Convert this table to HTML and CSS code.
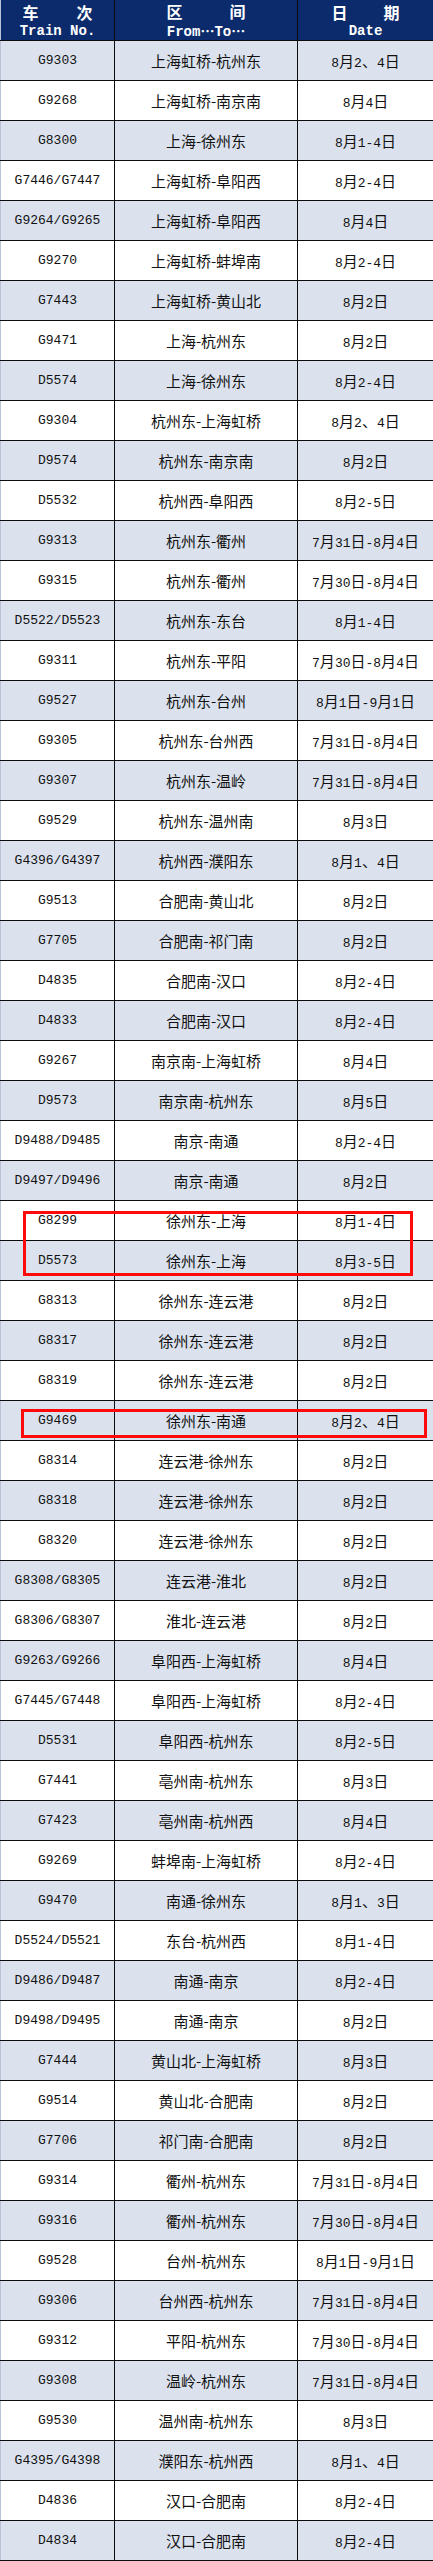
FILE: index.html
```html
<!DOCTYPE html>
<html lang="zh-CN">
<head>
<meta charset="utf-8">
<title>列车停运表</title>
<link rel="stylesheet" href="styles.css">
</head>
<body>
<div class="sheet">
<table class="grid">
<colgroup><col class="c1"><col class="c2"><col class="c3"></colgroup>
<thead>
<tr>
<th><div class="pair w1"><span>车</span><span>次</span></div><div class="en">Train No.</div></th>
<th><div class="pair w2"><span>区</span><span>间</span></div><div class="en">From<span class="k">…</span>To<span class="k">…</span></div></th>
<th><div class="pair w3"><span>日</span><span>期</span></div><div class="en">Date</div></th>
</tr>
</thead>
<tbody>
<tr><td>G9303</td><td>上海虹桥-杭州东</td><td>8<span class="k">月</span>2<span class="k">、</span>4<span class="k">日</span></td></tr>
<tr><td>G9268</td><td>上海虹桥-南京南</td><td>8<span class="k">月</span>4<span class="k">日</span></td></tr>
<tr><td>G8300</td><td>上海-徐州东</td><td>8<span class="k">月</span>1-4<span class="k">日</span></td></tr>
<tr><td>G7446/G7447</td><td>上海虹桥-阜阳西</td><td>8<span class="k">月</span>2-4<span class="k">日</span></td></tr>
<tr><td>G9264/G9265</td><td>上海虹桥-阜阳西</td><td>8<span class="k">月</span>4<span class="k">日</span></td></tr>
<tr><td>G9270</td><td>上海虹桥-蚌埠南</td><td>8<span class="k">月</span>2-4<span class="k">日</span></td></tr>
<tr><td>G7443</td><td>上海虹桥-黄山北</td><td>8<span class="k">月</span>2<span class="k">日</span></td></tr>
<tr><td>G9471</td><td>上海-杭州东</td><td>8<span class="k">月</span>2<span class="k">日</span></td></tr>
<tr><td>D5574</td><td>上海-徐州东</td><td>8<span class="k">月</span>2-4<span class="k">日</span></td></tr>
<tr><td>G9304</td><td>杭州东-上海虹桥</td><td>8<span class="k">月</span>2<span class="k">、</span>4<span class="k">日</span></td></tr>
<tr><td>D9574</td><td>杭州东-南京南</td><td>8<span class="k">月</span>2<span class="k">日</span></td></tr>
<tr><td>D5532</td><td>杭州西-阜阳西</td><td>8<span class="k">月</span>2-5<span class="k">日</span></td></tr>
<tr><td>G9313</td><td>杭州东-衢州</td><td>7<span class="k">月</span>31<span class="k">日</span>-8<span class="k">月</span>4<span class="k">日</span></td></tr>
<tr><td>G9315</td><td>杭州东-衢州</td><td>7<span class="k">月</span>30<span class="k">日</span>-8<span class="k">月</span>4<span class="k">日</span></td></tr>
<tr><td>D5522/D5523</td><td>杭州东-东台</td><td>8<span class="k">月</span>1-4<span class="k">日</span></td></tr>
<tr><td>G9311</td><td>杭州东-平阳</td><td>7<span class="k">月</span>30<span class="k">日</span>-8<span class="k">月</span>4<span class="k">日</span></td></tr>
<tr><td>G9527</td><td>杭州东-台州</td><td>8<span class="k">月</span>1<span class="k">日</span>-9<span class="k">月</span>1<span class="k">日</span></td></tr>
<tr><td>G9305</td><td>杭州东-台州西</td><td>7<span class="k">月</span>31<span class="k">日</span>-8<span class="k">月</span>4<span class="k">日</span></td></tr>
<tr><td>G9307</td><td>杭州东-温岭</td><td>7<span class="k">月</span>31<span class="k">日</span>-8<span class="k">月</span>4<span class="k">日</span></td></tr>
<tr><td>G9529</td><td>杭州东-温州南</td><td>8<span class="k">月</span>3<span class="k">日</span></td></tr>
<tr><td>G4396/G4397</td><td>杭州西-濮阳东</td><td>8<span class="k">月</span>1<span class="k">、</span>4<span class="k">日</span></td></tr>
<tr><td>G9513</td><td>合肥南-黄山北</td><td>8<span class="k">月</span>2<span class="k">日</span></td></tr>
<tr><td>G7705</td><td>合肥南-祁门南</td><td>8<span class="k">月</span>2<span class="k">日</span></td></tr>
<tr><td>D4835</td><td>合肥南-汉口</td><td>8<span class="k">月</span>2-4<span class="k">日</span></td></tr>
<tr><td>D4833</td><td>合肥南-汉口</td><td>8<span class="k">月</span>2-4<span class="k">日</span></td></tr>
<tr><td>G9267</td><td>南京南-上海虹桥</td><td>8<span class="k">月</span>4<span class="k">日</span></td></tr>
<tr><td>D9573</td><td>南京南-杭州东</td><td>8<span class="k">月</span>5<span class="k">日</span></td></tr>
<tr><td>D9488/D9485</td><td>南京-南通</td><td>8<span class="k">月</span>2-4<span class="k">日</span></td></tr>
<tr><td>D9497/D9496</td><td>南京-南通</td><td>8<span class="k">月</span>2<span class="k">日</span></td></tr>
<tr><td>G8299</td><td>徐州东-上海</td><td>8<span class="k">月</span>1-4<span class="k">日</span></td></tr>
<tr><td>D5573</td><td>徐州东-上海</td><td>8<span class="k">月</span>3-5<span class="k">日</span></td></tr>
<tr><td>G8313</td><td>徐州东-连云港</td><td>8<span class="k">月</span>2<span class="k">日</span></td></tr>
<tr><td>G8317</td><td>徐州东-连云港</td><td>8<span class="k">月</span>2<span class="k">日</span></td></tr>
<tr><td>G8319</td><td>徐州东-连云港</td><td>8<span class="k">月</span>2<span class="k">日</span></td></tr>
<tr><td>G9469</td><td>徐州东-南通</td><td>8<span class="k">月</span>2<span class="k">、</span>4<span class="k">日</span></td></tr>
<tr><td>G8314</td><td>连云港-徐州东</td><td>8<span class="k">月</span>2<span class="k">日</span></td></tr>
<tr><td>G8318</td><td>连云港-徐州东</td><td>8<span class="k">月</span>2<span class="k">日</span></td></tr>
<tr><td>G8320</td><td>连云港-徐州东</td><td>8<span class="k">月</span>2<span class="k">日</span></td></tr>
<tr><td>G8308/G8305</td><td>连云港-淮北</td><td>8<span class="k">月</span>2<span class="k">日</span></td></tr>
<tr><td>G8306/G8307</td><td>淮北-连云港</td><td>8<span class="k">月</span>2<span class="k">日</span></td></tr>
<tr><td>G9263/G9266</td><td>阜阳西-上海虹桥</td><td>8<span class="k">月</span>4<span class="k">日</span></td></tr>
<tr><td>G7445/G7448</td><td>阜阳西-上海虹桥</td><td>8<span class="k">月</span>2-4<span class="k">日</span></td></tr>
<tr><td>D5531</td><td>阜阳西-杭州东</td><td>8<span class="k">月</span>2-5<span class="k">日</span></td></tr>
<tr><td>G7441</td><td>亳州南-杭州东</td><td>8<span class="k">月</span>3<span class="k">日</span></td></tr>
<tr><td>G7423</td><td>亳州南-杭州西</td><td>8<span class="k">月</span>4<span class="k">日</span></td></tr>
<tr><td>G9269</td><td>蚌埠南-上海虹桥</td><td>8<span class="k">月</span>2-4<span class="k">日</span></td></tr>
<tr><td>G9470</td><td>南通-徐州东</td><td>8<span class="k">月</span>1<span class="k">、</span>3<span class="k">日</span></td></tr>
<tr><td>D5524/D5521</td><td>东台-杭州西</td><td>8<span class="k">月</span>1-4<span class="k">日</span></td></tr>
<tr><td>D9486/D9487</td><td>南通-南京</td><td>8<span class="k">月</span>2-4<span class="k">日</span></td></tr>
<tr><td>D9498/D9495</td><td>南通-南京</td><td>8<span class="k">月</span>2<span class="k">日</span></td></tr>
<tr><td>G7444</td><td>黄山北-上海虹桥</td><td>8<span class="k">月</span>3<span class="k">日</span></td></tr>
<tr><td>G9514</td><td>黄山北-合肥南</td><td>8<span class="k">月</span>2<span class="k">日</span></td></tr>
<tr><td>G7706</td><td>祁门南-合肥南</td><td>8<span class="k">月</span>2<span class="k">日</span></td></tr>
<tr><td>G9314</td><td>衢州-杭州东</td><td>7<span class="k">月</span>31<span class="k">日</span>-8<span class="k">月</span>4<span class="k">日</span></td></tr>
<tr><td>G9316</td><td>衢州-杭州东</td><td>7<span class="k">月</span>30<span class="k">日</span>-8<span class="k">月</span>4<span class="k">日</span></td></tr>
<tr><td>G9528</td><td>台州-杭州东</td><td>8<span class="k">月</span>1<span class="k">日</span>-9<span class="k">月</span>1<span class="k">日</span></td></tr>
<tr><td>G9306</td><td>台州西-杭州东</td><td>7<span class="k">月</span>31<span class="k">日</span>-8<span class="k">月</span>4<span class="k">日</span></td></tr>
<tr><td>G9312</td><td>平阳-杭州东</td><td>7<span class="k">月</span>30<span class="k">日</span>-8<span class="k">月</span>4<span class="k">日</span></td></tr>
<tr><td>G9308</td><td>温岭-杭州东</td><td>7<span class="k">月</span>31<span class="k">日</span>-8<span class="k">月</span>4<span class="k">日</span></td></tr>
<tr><td>G9530</td><td>温州南-杭州东</td><td>8<span class="k">月</span>3<span class="k">日</span></td></tr>
<tr><td>G4395/G4398</td><td>濮阳东-杭州西</td><td>8<span class="k">月</span>1<span class="k">、</span>4<span class="k">日</span></td></tr>
<tr><td>D4836</td><td>汉口-合肥南</td><td>8<span class="k">月</span>2-4<span class="k">日</span></td></tr>
<tr><td>D4834</td><td>汉口-合肥南</td><td>8<span class="k">月</span>2-4<span class="k">日</span></td></tr>
</tbody>
</table>
<div class="mark mark-a"></div>
<div class="mark mark-b"></div>
</div>
</body>
</html>
```

FILE: styles.css
```css
html, body {
  margin: 0;
  padding: 0;
  background: #ffffff;
}

.sheet {
  position: relative;
  width: 433px;
}

.grid {
  width: 433px;
  table-layout: fixed;
  border-collapse: collapse;
  font-family: "Liberation Mono", "Noto Sans CJK SC", monospace;
  font-size: 13px;
  color: #111;
}

.c1 { width: 114px; }
.c2 { width: 183px; }
.c3 { width: 136px; }

.grid th,
.grid td {
  height: 39px;
  padding: 0;
  border: 1px solid #0d0d0d;
  text-align: center;
  vertical-align: middle;
  white-space: nowrap;
}

.grid td {
  overflow: hidden;
}

.grid th:first-child,
.grid td:first-child {
  border-left: 1px solid #b9c3d6;
}

.grid thead th {
  background: #0b2b6c;
  color: #ffffff;
  border-top: none;
  font-weight: bold;
  font-size: 14px;
  line-height: 1;
  padding-top: 1px;
}

.pair {
  display: flex;
  justify-content: space-between;
  margin: 0 auto 2px;
  font-family: "Noto Sans CJK SC", sans-serif;
  font-size: 16px;
  font-weight: bold;
  line-height: 18px;
}

.w1 { width: 70px; }
.w2 { width: 79px; }
.w3 { width: 68px; }

.en {
  font-family: "Liberation Mono", monospace;
  font-size: 14px;
  font-weight: bold;
  line-height: 16px;
}

.en .k {
  font-size: 14px;
  line-height: 16px;
  font-weight: bold;
}

.grid tbody tr:nth-child(odd) td {
  background: #dbe2ee;
}

.grid tbody tr:nth-child(even) td {
  background: #ffffff;
}

.grid td:nth-child(2) {
  font-family: "Noto Sans CJK SC", sans-serif;
  font-size: 15px;
}

.k {
  font-family: "Noto Sans CJK SC", sans-serif;
  font-size: 15px;
}

.mark {
  position: absolute;
  box-sizing: border-box;
  border: 3px solid #ff0a0a;
}

.mark-a {
  left: 23px;
  top: 1211px;
  width: 390px;
  height: 65px;
}

.mark-b {
  left: 21px;
  top: 1409px;
  width: 406px;
  height: 29px;
}
```
